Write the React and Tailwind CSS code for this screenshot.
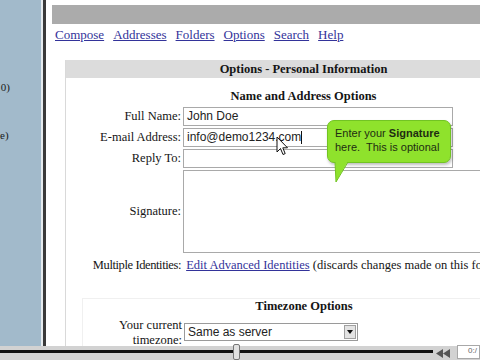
import React from "react";

const navLinks = ["Compose", "Addresses", "Folders", "Options", "Search", "Help"];

function Row({ label, children, className = "" }) {
  return (
    <div className={`flex items-center ${className}`}>
      <span className="w-[117px] pr-[2px] text-right whitespace-nowrap">{label}</span>
      {children}
    </div>
  );
}

function TextBox({ children }) {
  return (
    <div className="w-[270px] h-[19px] border border-[#a9a9a9] bg-white px-[3px] font-['Liberation_Sans',sans-serif] text-[12px] leading-[17px] text-[#222]">
      {children}
    </div>
  );
}

export default function App() {
  return (
    <div className="relative w-[480px] h-[360px] overflow-hidden bg-white flex flex-col font-['Liberation_Serif',serif] text-[12.5px] text-[#151515]">
      <div className="flex h-[346px]">
        {/* folder list, scrolled off to the left */}
        <aside className="w-[41px] bg-[#a2bacb] text-[11px] leading-[11px] text-[#1a1a1a] overflow-hidden">
          <p className="mt-[82px] text-right pr-[31px]">0)</p>
          <p className="mt-[37px] text-right pr-[34px]">e)</p>
        </aside>
        <div className="w-[2px] bg-[#e6ebee]" />
        <div className="w-[3px] bg-[#3a3a3a]" />

        <main className="flex-1 min-w-0 overflow-hidden pt-[5px] pl-[6px]">
          <div className="h-[19px] bg-[#ababab]" />

          <nav className="mt-[3px] h-[16px] leading-[16px] pl-[3px] flex gap-[9px] text-[13px]">
            {navLinks.map((l) => (
              <a key={l} href="#" className="text-[#33339a] underline">
                {l}
              </a>
            ))}
          </nav>

          <section className="mt-[17px] ml-[13px] w-[476px] h-[300px] border-l border-[#d9d9d9]">
            <div className="h-[18px] leading-[18px] bg-[#dcdcdc] text-center font-bold">
              Options - Personal Information
            </div>

            <h3 className="mt-[11px] h-[14px] leading-[14px] text-center font-bold">
              Name and Address Options
            </h3>

            <div className="mt-[4px] flex flex-col gap-[2px]">
              <Row label="Full Name:">
                <TextBox>John Doe</TextBox>
              </Row>
              <Row label="E-mail Address:">
                <TextBox>
                  info@demo1234.com
                  <span className="inline-block w-[1px] h-[13px] bg-[#111] align-middle" />
                </TextBox>
              </Row>
              <Row label="Reply To:">
                <TextBox />
              </Row>
              <Row label="Signature:">
                <div className="w-[320px] h-[83px] border border-[#a9a9a9] bg-white" />
              </Row>
            </div>

            <div className="mt-[5px] h-[14px] leading-[14px] flex whitespace-nowrap">
              <span className="w-[117px] pr-[2px] text-right tracking-[-0.4px]">Multiple Identities:</span>
              <span>
                &nbsp;<a href="#" className="text-[#33339a] underline">Edit Advanced Identities</a>{" "}
                (discards changes made on this form so far)
              </span>
            </div>

            <div className="mt-[26px] ml-[16px] border-l border-t border-[#f0f0f0]">
              <h3 className="-ml-[16px] h-[14px] leading-[14px] text-center font-bold">Timezone Options</h3>
              <div className="mt-[5px] flex items-start">
                <span className="ml-[33px] w-[68px] pr-[2px] text-right leading-[15px]">
                  Your current timezone:
                </span>
                <div className="mt-[5px] w-[174px] h-[18px] border border-[#9a9a9a] bg-white flex items-center justify-between font-['Liberation_Sans',sans-serif] text-[12px] text-[#222]">
                  <span className="pl-[3px]">Same as server</span>
                  <span className="mr-[1px] w-[12px] h-[14px] bg-[#e3e3e3] border border-[#a0a0a0] flex items-center justify-center">
                    <svg width="6" height="4" viewBox="0 0 6 4">
                      <path d="M0 0 L6 0 L3 4 Z" fill="#111" />
                    </svg>
                  </span>
                </div>
              </div>
            </div>
          </section>
        </main>
      </div>

      {/* video player strip */}
      <div className="relative h-[14px] bg-[#d2d2d2] flex items-start">
        <div className="mt-[4px] w-[433px] h-[3px] bg-[#111]" />
        <div className="ml-[3px] mt-[1px] w-[17px] h-[12px] flex items-center">
          <svg width="14" height="9" viewBox="0 0 14 9">
            <path d="M7 0 L7 9 L0 4.5 Z M14 0 L14 9 L7 4.5 Z" fill="#555" />
          </svg>
        </div>
        <div className="ml-[4px] mt-[-1px] flex-1 h-[14px] bg-white border border-[#a8a8a8] text-[8px] leading-[9px] text-[#666] pl-[10px] font-['Liberation_Sans',sans-serif]">
          0:/
        </div>
        <div className="absolute left-[233px] top-[-2px] w-[7px] h-[16px] rounded-[2px] bg-[#e2e2e2] border border-[#777]" />
      </div>

      {/* help balloon */}
      <div className="absolute left-[327px] top-[120px] w-[124px] h-[43px] rounded-[7px] bg-[#8fe22c] border border-[#72c423] shadow-[1px_2px_3px_rgba(0,0,0,0.25)] pl-[7px] pt-[5px] font-['Liberation_Sans',sans-serif] text-[11px] leading-[14px] text-[#1e2d12] whitespace-nowrap">
        <p>
          Enter your <b>Signature</b>
        </p>
        <p>here.&nbsp; This is optional</p>
      </div>
      <svg className="absolute left-[334px] top-[161px]" width="16" height="22" viewBox="0 0 16 22">
        <path d="M1 0 L14 0 L2 21 Z" fill="#8fe22c" />
        <path d="M14 1 L2 21 L1 1" fill="none" stroke="#72c423" strokeWidth="1" />
      </svg>

      {/* mouse pointer */}
      <svg className="absolute left-[276px] top-[136px]" width="13" height="20" viewBox="0 0 13 20">
        <path
          d="M1 1 L1 16 L4.5 12.5 L7 18.5 L9.2 17.6 L6.8 11.8 L11.5 11.8 Z"
          fill="#fff"
          stroke="#111"
          strokeWidth="1"
          strokeLinejoin="round"
        />
      </svg>
    </div>
  );
}
